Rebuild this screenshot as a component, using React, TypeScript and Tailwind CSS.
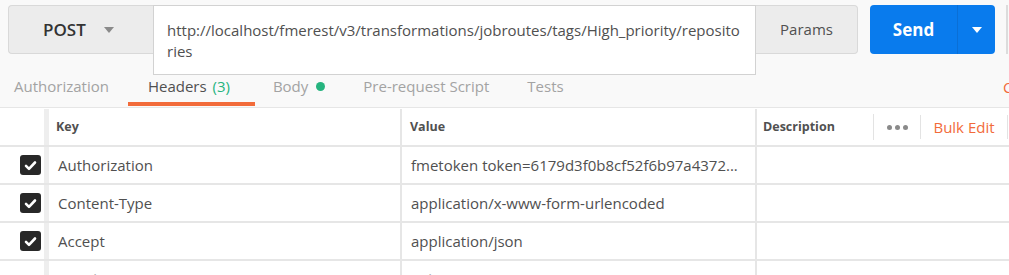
import { ReactNode } from 'react'

const Caret = ({ className }: { className: string }) => (
  <svg className={className} width="10" height="6" viewBox="0 0 10 6">
    <path d="M0 0h10L5 6z" fill="currentColor" />
  </svg>
)

const Check = () => (
  <div className="flex h-[20px] w-[21px] items-center justify-center rounded-[3px] bg-[#282828]">
    <svg width="13" height="11" viewBox="0 0 13 11" fill="none" stroke="white" strokeWidth={2.6} strokeLinecap="round" strokeLinejoin="round">
      <path d="M2 5.8l3 3L11 2.5" />
    </svg>
  </div>
)

type RowProps = {
  checked?: boolean
  k: ReactNode
  v: ReactNode
  d?: ReactNode
  placeholder?: boolean
}

const Row = ({ checked, k, v, d, placeholder }: RowProps) => (
  <div className="flex h-[38px] border-b-2 border-[#e6e6e6] bg-white text-[15px]">
    <div className="flex w-[44px] items-center justify-end pr-[3px]">{checked && <Check />}</div>
    <div className="w-[5px] bg-[#eeeeee]" />
    <div className={`flex w-[351px] items-center pl-[9px] ${placeholder ? 'text-[#b0b0b0]' : 'text-[#505050]'}`}>{k}</div>
    <div className="w-[2px] bg-[#e6e6e6]" />
    <div className={`flex w-[353px] items-center pl-[9px] ${placeholder ? 'text-[#b0b0b0]' : 'text-[#505050]'}`}>{v}</div>
    <div className="w-[2px] bg-[#e6e6e6]" />
    <div className="flex flex-1 items-center pl-[9px] text-[#b0b0b0]">{d}</div>
  </div>
)

export default function App() {
  return (
    <div className="relative h-[275px] w-[1009px] overflow-hidden bg-[#f9f9f9] font-['Open_Sans',sans-serif]">
      {/* request bar */}
      <div className="flex items-start pl-[8px] pt-[5px]">
        <div className="flex h-[49px] w-[145px] items-center rounded-l-[4px] border border-r-0 border-[#d9d9d9] bg-[#ececec] pl-[34px]">
          <span className="text-[17px] font-semibold text-[#333333]">POST</span>
          <Caret className="ml-[18px] text-[#8a8a8a]" />
        </div>
        <div className="h-[70px] w-[603px] border border-[#d2d2d2] bg-white pl-[13px] pr-[12px] pt-[14px] text-[15px] leading-[21px] text-[#505050] break-all">
          http://localhost/fmerest/v3/transformations/jobroutes/tags/High_priority/repositories
        </div>
        <div className="flex h-[49px] w-[102px] items-center justify-center rounded-r-[4px] border border-l-0 border-[#d9d9d9] bg-[#ececec] text-[15px] text-[#505050]">
          Params
        </div>
        <div className="ml-[12px] flex h-[49px] w-[125px] rounded-[4px] bg-[#097bed] text-white">
          <div className="flex w-[87px] items-center justify-center text-[17px] font-bold">Send</div>
          <div className="w-px bg-[#0a6fd6]" />
          <div className="flex flex-1 items-center justify-center">
            <Caret className="text-white" />
          </div>
        </div>
        <div className="ml-[11px] h-[49px] w-[2px] bg-[#dcdcdc]" />
      </div>

      {/* tabs */}
      <div className="relative flex h-[32px] items-start text-[15px] text-[#a3a3a3]">
        <div className="ml-[14px]">Authorization</div>
        <div className="ml-[19px] flex h-[31px] w-[127px] border-b-[4px] border-[#f26b3a] pl-[20px]">
          <span className="text-[#505050]">Headers</span>
          <span className="ml-[6px] text-[#26b47f]">(3)</span>
        </div>
        <div className="ml-[18px] flex items-center">
          Body
          <span className="ml-[8px] mt-[1px] h-[9px] w-[9px] rounded-full bg-[#26b47f]" />
        </div>
        <div className="ml-[38px]">Pre-request Script</div>
        <div className="ml-[38px]">Tests</div>
        <div className="absolute left-[1003px] top-[1px] text-[#f26b3a]">Cookies</div>
      </div>

      {/* table */}
      <div className="border-t border-[#e6e6e6]">
        <div className="flex h-[39px] border-b-2 border-[#e6e6e6] bg-white pt-[1px] text-[12.5px] font-bold text-[#505050]">
          <div className="w-[44px]" />
          <div className="w-[5px] bg-[#eeeeee]" />
          <div className="flex w-[351px] items-center pl-[7px]">Key</div>
          <div className="w-[2px] bg-[#e6e6e6]" />
          <div className="flex w-[353px] items-center pl-[8px]">Value</div>
          <div className="w-[2px] bg-[#e6e6e6]" />
          <div className="flex w-[116px] items-center pl-[6px]">Description</div>
          <div className="my-[5px] w-px bg-[#e3e3e3]" />
          <div className="flex w-[46px] items-center justify-center gap-[3px]">
            <span className="h-[5px] w-[5px] rounded-full bg-[#8a8a8a]" />
            <span className="h-[5px] w-[5px] rounded-full bg-[#8a8a8a]" />
            <span className="h-[5px] w-[5px] rounded-full bg-[#8a8a8a]" />
          </div>
          <div className="my-[6px] w-px bg-[#e3e3e3]" />
          <div className="flex w-[86px] items-center justify-center text-[15px] font-normal text-[#f26b3a]">Bulk Edit</div>
          <div className="my-[6px] w-px bg-[#e3e3e3]" />
        </div>
        <Row checked k="Authorization" v="fmetoken token=6179d3f0b8cf52f6b97a4372..." />
        <Row checked k="Content-Type" v="application/x-www-form-urlencoded" />
        <Row checked k="Accept" v="application/json" />
        <Row placeholder k="New key" v="Value" d="Description" />
      </div>
    </div>
  )
}
